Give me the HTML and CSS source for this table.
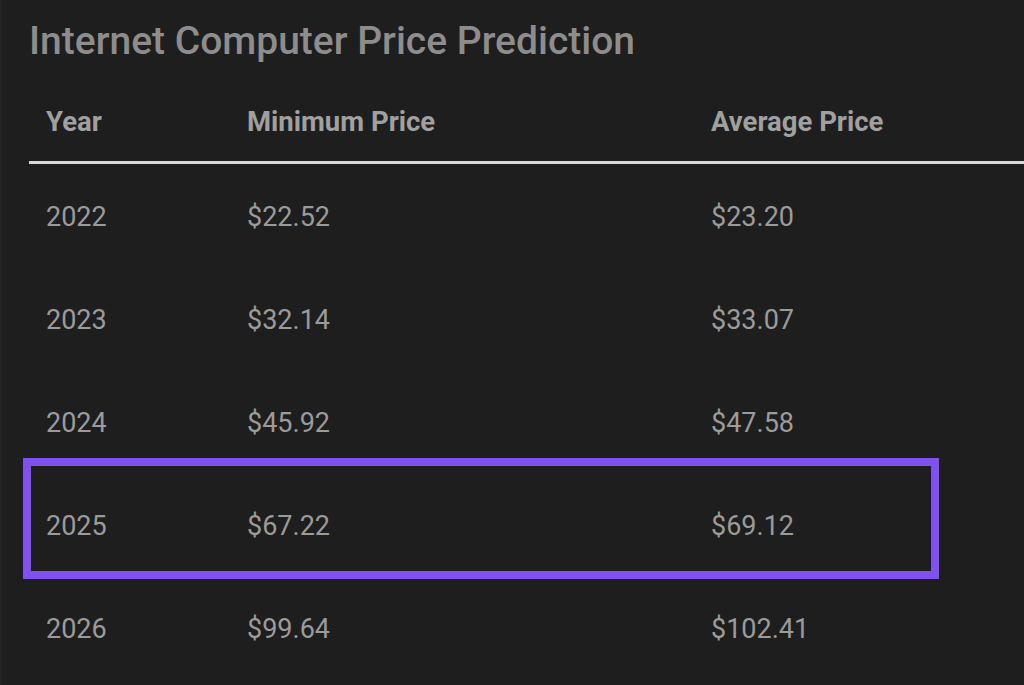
FILE: index.html
```html
<!DOCTYPE html>
<html lang="en">
<head>
<meta charset="utf-8">
<title>Internet Computer Price Prediction</title>
<link rel="stylesheet" href="styles.css">
</head>
<body>
<div class="page">
  <h2 class="title">Internet Computer Price Prediction</h2>
  <div class="table-wrap">
    <table class="prices">
      <thead>
        <tr><th class="c-year">Year</th><th class="c-min">Minimum Price</th><th class="c-avg">Average Price</th></tr>
      </thead>
      <tbody>
        <tr><td>2022</td><td>$22.52</td><td>$23.20</td></tr>
        <tr><td>2023</td><td>$32.14</td><td>$33.07</td></tr>
        <tr><td>2024</td><td>$45.92</td><td>$47.58</td></tr>
        <tr><td>2025</td><td>$67.22</td><td>$69.12</td></tr>
        <tr><td>2026</td><td>$99.64</td><td>$102.41</td></tr>
      </tbody>
    </table>
    <div class="marker"></div>
  </div>
</div>
</body>
</html>
```
FILE: styles.css
```css
html, body {
  margin: 0;
  padding: 0;
  height: 100%;
  overflow: hidden;
  background: #1e1e1f;
}
body {
  font-family: Roboto, "Liberation Sans", sans-serif;
  border-left: 2px solid #242425;
  box-sizing: border-box;
}
.page {
  padding: 0 0 0 27px;
}
.title {
  margin: 0;
  padding-top: 18px;
  font-size: 39px;
  line-height: 46px;
  font-weight: 500;
  color: #8d8d8d;
}
.table-wrap {
  position: relative;
  margin-top: 33px;
}
.prices {
  border-collapse: collapse;
  width: 100%;
  table-layout: fixed;
}
.prices th {
  text-align: left;
  font-size: 27.5px;
  font-weight: 700;
  color: #a0a0a0;
  padding: 9px 17px 0;
  height: 55px;
  vertical-align: top;
  line-height: 32px;
  border-bottom: 3px solid #d9d9d9;
}
.c-year { width: 167px; }
.c-min { width: 430px; }
.prices td {
  font-size: 27px;
  color: #9b9b9b;
  padding: 3px 17px 0;
  height: 100px;
  line-height: 32px;
  vertical-align: middle;
}
.marker {
  position: absolute;
  left: -6px;
  top: 361px;
  width: 900px;
  height: 105px;
  border: 8px solid #7f52f0;
}
```
